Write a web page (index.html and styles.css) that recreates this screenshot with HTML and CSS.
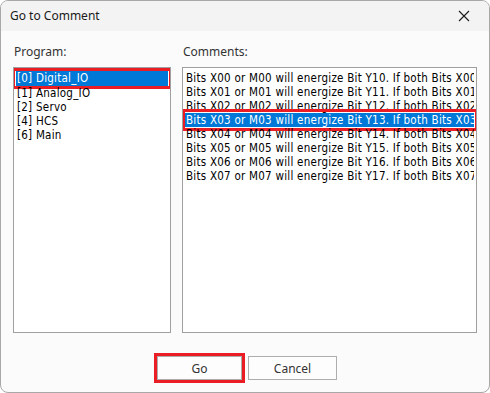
FILE: index.html
```html
<!DOCTYPE html>
<html>
<head>
<meta charset="utf-8">
<link rel="stylesheet" href="styles.css">
</head>
<body>
<div class="window">
  <div class="titlebar">
    <span class="title">Go to Comment</span>
    <svg class="close" width="12" height="12" viewBox="0 0 12 12"><path d="M1 1 L11 11 M11 1 L1 11" stroke="#1a1a1a" stroke-width="1.1" fill="none"/></svg>
  </div>
  <div class="content">
    <div class="columns">
      <div class="col col-left">
        <div class="label">Program:</div>
        <div class="listbox">
          <div class="item selected marked">[0] Digital_IO</div>
          <div class="item">[1] Analog_IO</div>
          <div class="item">[2] Servo</div>
          <div class="item">[4] HCS</div>
          <div class="item">[6] Main</div>
        </div>
      </div>
      <div class="col col-right">
        <div class="label">Comments:</div>
        <div class="listbox">
          <div class="item">Bits X00 or M00 will energize Bit Y10. If both Bits X00 and M00 are on</div>
          <div class="item">Bits X01 or M01 will energize Bit Y11. If both Bits X01 and M01 are on</div>
          <div class="item">Bits X02 or M02 will energize Bit Y12. If both Bits X02 and M02 are on</div>
          <div class="item selected marked">Bits X03 or M03 will energize Bit Y13. If both Bits X03 and M03 are on</div>
          <div class="item">Bits X04 or M04 will energize Bit Y14. If both Bits X04 and M04 are on</div>
          <div class="item">Bits X05 or M05 will energize Bit Y15. If both Bits X05 and M05 are on</div>
          <div class="item">Bits X06 or M06 will energize Bit Y16. If both Bits X06 and M06 are on</div>
          <div class="item">Bits X07 or M07 will energize Bit Y17. If both Bits X07 and M07 are on</div>
        </div>
      </div>
    </div>
    <div class="buttons">
      <button class="btn marked">Go</button>
      <button class="btn">Cancel</button>
    </div>
  </div>
</div>
</body>
</html>
```
FILE: styles.css
```css
* { box-sizing: border-box; }
html, body { margin: 0; padding: 0; background: #ffffff; }
.window {
  width: 490px;
  height: 393px;
  border: 1px solid #a8a8a8;
  border-radius: 8px;
  overflow: hidden;
  background: #fbfbfb;
  display: flex;
  flex-direction: column;
  font-family: "Noto Sans", "Open Sans", sans-serif;
}
.titlebar {
  height: 30px;
  background: #f3f3f3;
  display: flex;
  align-items: center;
  justify-content: space-between;
  padding: 0 19px 0 9px;
  flex: none;
}
.title {
  font-size: 12px;
  color: #1a1a1a;
  margin-top: -1px;
}
.close { display: block; }
.content {
  flex: 1;
  display: flex;
  flex-direction: column;
  padding: 11px 12px 0 12px;
}
.columns {
  display: flex;
  gap: 11px;
}
.col { display: flex; flex-direction: column; }
.col-left { width: 159px; }
.col-right { width: 295px; }
.label {
  font-size: 12px;
  color: #333333;
  height: 25px;
  line-height: 16px;
  padding-top: 2px;
  padding-left: 1px;
}
.listbox {
  height: 266px;
  border: 1px solid #a0a0a0;
  background: #ffffff;
  padding: 3px 2px;
  overflow: hidden;
  font-family: "DejaVu Sans Condensed", "DejaVu Sans", sans-serif;
  font-size: 11.5px;
  letter-spacing: 0.25px;
  color: #000000;
}
.item {
  height: 14px;
  line-height: 14px;
  padding-left: 1px;
  white-space: nowrap;
  overflow: hidden;
  position: relative;
}
.col-left .item:first-child { height: 15px; line-height: 15px; }
.selected {
  background: #0078d7;
  color: #ffffff;
  overflow: visible;
}
.marked::after {
  content: "";
  position: absolute;
  top: -3px;
  bottom: -3px;
  left: -4px;
  right: -4px;
  border: 3px solid #ea1c24;
  pointer-events: none;
}
.col-right .marked::after {
  left: -3px;
  right: -4px;
  top: -4px;
  bottom: -4px;
}
.col-right .item.selected { overflow: clip; overflow-clip-margin: 6px; }
.buttons {
  display: flex;
  justify-content: center;
  gap: 6px;
  margin-top: 23px;
  padding-left: 4px;
}
.btn {
  width: 85px;
  height: 24px;
  border: 1px solid #adadad;
  background: #fdfdfd;
  font-family: "Noto Sans", "Open Sans", sans-serif;
  font-size: 12px;
  color: #333333;
  padding: 0;
  position: relative;
  border-radius: 0;
}
.btn + .btn { width: 89px; }
.btn.marked::after {
  top: -4px;
  bottom: -4px;
  left: -4px;
  right: -4px;
}
```
